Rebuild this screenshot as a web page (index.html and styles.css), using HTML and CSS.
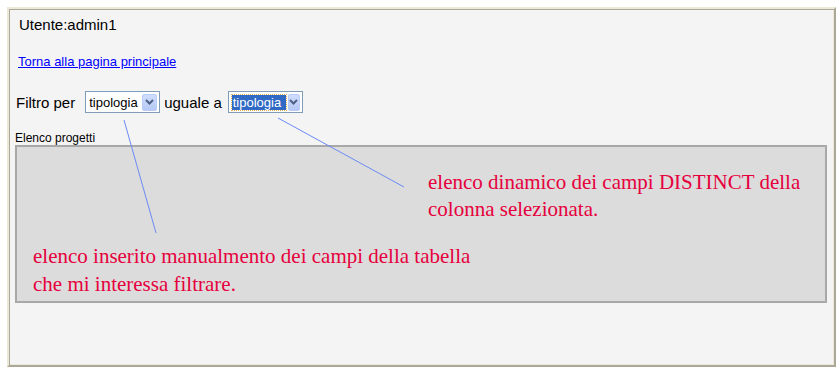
FILE: index.html
```html
<!DOCTYPE html>
<html lang="it">
<head>
    <meta charset="UTF-8">
    <title>Elenco progetti</title>
    <link rel="stylesheet" href="styles.css">
</head>
<body>
    <div class="frame">
        <div class="user">Utente:admin1</div>
        <a class="back" href="#">Torna alla pagina principale</a>

        <div class="filter">
            <span class="label">Filtro per</span>
            <span class="combo combo-field">
                <span class="combo-text">tipologia</span>
                <span class="combo-btn">
                    <svg width="9" height="6" viewBox="0 0 9 6"><path d="M1 1 L4.5 4.5 L8 1" fill="none" stroke="#4d6185" stroke-width="2"/></svg>
                </span>
            </span>
            <span class="label">uguale a</span>
            <span class="combo combo-value">
                <span class="combo-text selected">tipologia</span>
                <span class="combo-btn">
                    <svg width="9" height="6" viewBox="0 0 9 6"><path d="M1 1 L4.5 4.5 L8 1" fill="none" stroke="#4d6185" stroke-width="2"/></svg>
                </span>
            </span>
        </div>

        <div class="list-title">Elenco progetti</div>
        <div class="list">
            <p class="note note-right">elenco dinamico dei campi DISTINCT della<br>colonna selezionata.</p>
            <p class="note note-left">elenco inserito manualmento dei campi della tabella<br>che mi interessa filtrare.</p>
        </div>
    </div>

    <svg class="arrows" width="840" height="370">
        <line x1="124" y1="120" x2="156" y2="233" />
        <line x1="278" y1="118" x2="404" y2="187" />
    </svg>
</body>
</html>
```

FILE: styles.css
```css
body {
    margin: 0;
    background: #ffffff;
    font-family: "Liberation Sans", Arial, sans-serif;
    position: relative;
    width: 840px;
    height: 370px;
    overflow: hidden;
}
.frame {
    box-sizing: border-box;
    width: 829px;
    height: 360px;
    margin: 7px 0 0 7px;
    padding: 7px 0 0 6px;
    background: #f4f4f4;
    border: 2px solid;
    border-color: #ece9d8 #aca899 #aca899 #ece9d8;
    box-shadow: inset 1px 1px 0 #aca899, inset -1px -1px 0 #ece9d8;
    display: flex;
    flex-direction: column;
    align-items: flex-start;
}
.user {
    font-size: 15px;
    line-height: 18px;
    margin-left: 4px;
    color: #000;
}
.back {
    font-size: 13px;
    line-height: 15px;
    margin: 20px 0 0 3px;
    color: #0000ff;
}
.filter {
    display: flex;
    align-items: center;
    height: 22px;
    margin: 22px 0 0 1px;
}
.label {
    font-size: 15px;
    color: #000;
}
.combo {
    box-sizing: border-box;
    display: flex;
    align-items: center;
    width: 75px;
    height: 22px;
    padding: 0 2px 0 3px;
    background: #fff;
    border: 1px solid #7f9db9;
}
.combo-field {
    margin: 0 4px 0 10px;
}
.combo-value {
    margin-left: 6px;
}
.combo-text {
    flex: 1;
    font-size: 13px;
    line-height: 15px;
    color: #000;
}
.combo-text.selected {
    flex: none;
    width: 53px;
    margin-right: 2px;
    padding-left: 1px;
    background: #316ac5;
    color: #fff;
    outline: 1px dotted #e0b050;
}
.combo-btn {
    box-sizing: border-box;
    width: 15px;
    height: 17px;
    display: flex;
    align-items: center;
    justify-content: center;
    background: linear-gradient(#cfdcfd, #b6c9f5);
    border: 1px solid #b8ccf6;
    border-radius: 2px;
}
.list-title {
    font-size: 12px;
    line-height: 14px;
    margin-top: 18px;
    color: #000;
}
.list {
    box-sizing: border-box;
    width: 812px;
    height: 158px;
    background: #dcdcdc;
    border: 2px solid #a8a8a8;
    padding: 22px 0 0 16px;
}
.note {
    margin: 0;
    font-family: "Liberation Serif", "Times New Roman", serif;
    font-size: 21px;
    line-height: 27px;
    color: #e6003c;
}
.note-right {
    margin-left: 395px;
}
.note-left {
    margin-top: 19px;
    line-height: 28px;
}
.arrows {
    position: absolute;
    left: 0;
    top: 0;
    pointer-events: none;
}
.arrows line {
    stroke: #6b8af5;
    stroke-width: 1;
}
```
